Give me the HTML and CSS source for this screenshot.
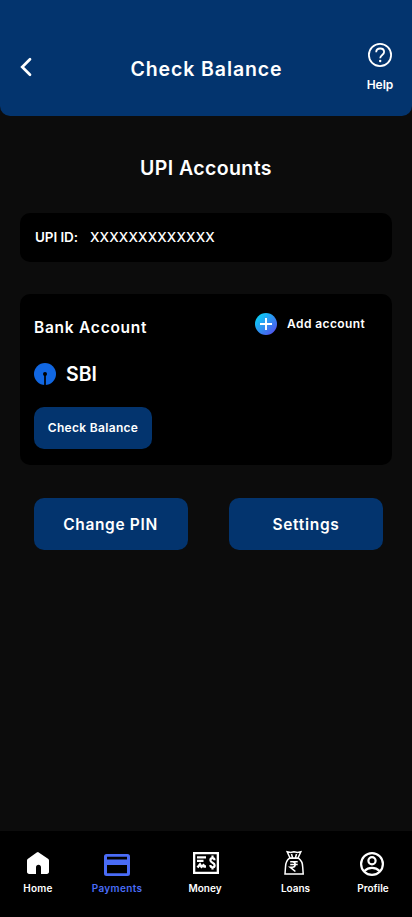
FILE: index.html
```html
<!DOCTYPE html>
<html lang="en">
<head>
<meta charset="utf-8">
<meta name="viewport" content="width=device-width, initial-scale=1">
<title>Check Balance</title>
<link rel="stylesheet" href="styles.css">
</head>
<body>
<div class="screen">
  <header class="header">
    <svg class="back" width="14" height="20" viewBox="0 0 14 20"><path d="M12 2.200 4.200 10l7.800 7.800" fill="none" stroke="#fff" stroke-width="2.700" stroke-linecap="round"/></svg>
    <h1 class="title">Check Balance</h1>
    <div class="help">
      <svg width="24" height="24" viewBox="0 0 24 24" fill="none" stroke="#fff"><circle cx="12" cy="12" r="11.100" stroke-width="1.800"/><path d="M8.200 9.200C8.200 7 9.900 5.500 12.200 5.500c2.200 0 3.900 1.400 3.900 3.400 0 3-3.900 3.100-3.900 6.300" stroke-width="1.800"/><circle cx="12.200" cy="18" r="1.200" fill="#fff" stroke="none"/></svg>
      <span class="help-label">Help</span>
    </div>
  </header>

  <main class="main">
    <h2 class="heading">UPI Accounts</h2>
    <section class="card upi">
      <span class="upi-label">UPI ID:</span>
      <span class="upi-value">XXXXXXXXXXXXX</span>
    </section>
    <section class="card bank">
      <div class="bank-head">
        <h3 class="bank-title">Bank Account</h3>
        <div class="add">
          <svg width="22" height="22" viewBox="0 0 22 22"><defs><linearGradient id="add" x1="0" y1="0" x2="1" y2="1"><stop offset=".1" stop-color="#08d2f7"/><stop offset=".9" stop-color="#5352ed"/></linearGradient></defs><circle cx="11" cy="11" r="11" fill="url(#add)"/><path d="M11 5v12M5 11h12" stroke="#fff" stroke-width="1.900"/></svg>
          <span class="add-label">Add account</span>
        </div>
      </div>
      <div class="bank-row">
        <svg width="22" height="22" viewBox="0 0 22 22"><circle cx="11" cy="11" r="11" fill="#1167e2"/><circle cx="11" cy="11" r="2"/><path d="M11 11v11" stroke="#000" stroke-width="1.700"/></svg>
        <span class="bank-name">SBI</span>
      </div>
      <button class="btn small">Check Balance</button>
    </section>
    <div class="actions">
      <button class="btn change">Change PIN</button>
      <button class="btn settings">Settings</button>
    </div>
  </main>

  <nav class="nav">
    <a class="item home">
      <svg width="26" height="26" viewBox="0 0 26 26"><path d="M13 2 23 8.700c.7.500 1 1 1 1.800v11.300c0 1.300-.9 2.200-2.200 2.200H16v-6.500c0-1.800-1-2.800-2.500-2.800s-2.500 1-2.500 2.800V24H4.200C2.900 24 2 23.100 2 21.800V10.500c0-.8.300-1.300 1-1.800L11.700 2.500Q13 1.500 14.300 2.500" fill="#fff"/></svg>
      <span>Home</span>
    </a>
    <a class="item payments">
      <svg width="26" height="26" viewBox="0 0 26 26"><path fill-rule="evenodd" d="M2.500 4h21A2.500 2.500 0 0 1 26 6.500v17a2.500 2.500 0 0 1-2.500 2.500h-21A2.500 2.500 0 0 1 0 23.500v-17A2.500 2.500 0 0 1 2.500 4M3 6.800v2.700h20V6.800zM3 15v8.300h20V15z" fill="#4a6cf7"/></svg>
      <span>Payments</span>
    </a>
    <a class="item money">
      <svg width="26" height="26" viewBox="0 0 26 26" fill="none" stroke="#fff"><path d="M1.150 3.150h23.700v19.700H1.150z" stroke-width="2.300"/><path d="M4 7.300h9M4 10.800h6.500" stroke-width="2.300"/><path d="M4.500 17.500 7 14.300l1.500 2.500 2-1.500.8 1.200H13" stroke-width="2.400"/><path d="M21.500 10.300c0-1.500-.8-2.200-2-2.200s-2.100.7-2.100 2.100c0 2.700 4.200 2.300 4.200 5 0 1.400-.9 2.100-2.100 2.100s-2.100-.8-2.100-2.300M19.500 5.500v2.700M19.500 17v2.500" stroke-width="2.200"/></svg>
      <span>Money</span>
    </a>
    <a class="item loans">
      <svg width="26" height="26" viewBox="0 0 26 26" fill="none" stroke="#fff" stroke-width="1.500"><path d="M9 8 6.200 1.800l3.500.7 3.300-.7 3.500.7 3.300-.7L17 8zM11.500 7.500 10.500 4M14.500 7.500l1-3.500M8.500 8.200C5.500 10.500 4.500 13 4.500 17l-.5 7h18.200l-.5-7c0-4-1.200-6.500-4.200-8.800z"/><path d="M9.200 11.700h7.500M9.200 14.500h7.500M9.200 11.700h2.200c3.700 0 3.700 5.500 0 5.500H9.200l5.200 4.300" stroke-width="1.600"/></svg>
      <span>Loans</span>
    </a>
    <a class="item profile">
      <svg width="26" height="26" viewBox="0 0 26 26" fill="none" stroke="#fff" stroke-width="2.200"><circle cx="13" cy="14" r="10.900"/><circle cx="13" cy="10.700" r="3.600"/><path d="M5.400 21c4.200-4.200 11-4.200 15.200 0"/></svg>
      <span>Profile</span>
    </a>
  </nav>
</div>
</body>
</html>
```

FILE: styles.css
```css
* { box-sizing: border-box; }

body {
  margin: 0;
  background: #0c0c0c;
  color: #fff;
  font-family: Inter, "Open Sans", sans-serif;
  font-weight: 600;
}

h1, h2, h3 { margin: 0; font-weight: 600; }
svg { display: block; flex: none; }
span, h1, h2, h3, button { white-space: nowrap; }

.screen {
  display: flex;
  flex-direction: column;
  height: 917px;
}

.header {
  display: grid;
  grid-template-columns: 60px 1fr 60px;
  height: 116px;
  padding: 42px 2px 0;
  background: #03346e;
  border-radius: 0 0 10px 10px;
}

.back { margin: 15px 0 0 16px; }

.title {
  margin-top: 12px;
  padding-left: 1px;
  text-align: center;
  font-size: 19.5px;
  line-height: 30px;
  letter-spacing: 0.9px;
}

.help {
  display: flex;
  flex-direction: column;
  align-items: center;
  margin-top: 1px;
}

.help-label {
  margin-top: 9px;
  font-size: 12px;
  line-height: 18px;
}

.main { flex: 1; padding: 37px 20px 0; }

.heading {
  text-align: center;
  font-size: 19.5px;
  line-height: 30px;
  letter-spacing: 0.4px;
}

.card { background: #000; border-radius: 10px; }

.upi {
  display: flex;
  align-items: center;
  height: 49px;
  margin-top: 30px;
  padding: 0 15px 1px;
  font-size: 13.5px;
  font-weight: 500;
}

.upi-label { width: 55px; font-weight: 600; letter-spacing: -0.1px; }
.upi-value { letter-spacing: 0.15px; }

.bank {
  height: 171px;
  margin-top: 32px;
  padding: 19px 14px 16px;
}

.bank-head { display: flex; justify-content: space-between; }

.bank-title {
  margin-top: 3px;
  font-size: 15.5px;
  line-height: 23px;
  letter-spacing: 0.75px;
}

.add {
  display: flex;
  align-items: center;
  gap: 10px;
  width: 123px;
  height: 22px;
}

.add-label {
  font-size: 12px;
  line-height: 18px;
  letter-spacing: 0.42px;
}

.bank-row {
  display: flex;
  align-items: center;
  gap: 10px;
  height: 22px;
  margin-top: 24px;
}

.bank-name { font-size: 19.5px; }

.btn {
  height: 52px;
  padding: 1px 0 0;
  border: 0;
  border-radius: 10px;
  background: #03346e;
  color: #fff;
  font: 600 15.5px/24px Inter, "Open Sans", sans-serif;
}

.change { padding-right: 1px; letter-spacing: 0.65px; }
.settings { letter-spacing: 0.7px; }

.small {
  display: block;
  width: 118px;
  height: 42px;
  margin-top: 22px;
  padding: 0;
  font-size: 12px;
  letter-spacing: 0.32px;
}

.actions {
  display: grid;
  grid-template-columns: 154px 154px;
  gap: 41px;
  margin: 33px 0 0 14px;
}

.nav {
  display: grid;
  grid-template-columns: 76px 82px 96px 80px 76px;
  height: 86px;
  padding-top: 19px;
  background: #000;
}

.item {
  display: flex;
  flex-direction: column;
  align-items: center;
  gap: 5px;
  font-size: 10px;
  line-height: 15px;
}

.home { letter-spacing: 0.3px; }
.payments { color: #4a6cf7; letter-spacing: 0.35px; }
.money span { padding-right: 2px; }
.loans span { padding-left: 3px; }
.profile span { padding-left: 2px; }
```
